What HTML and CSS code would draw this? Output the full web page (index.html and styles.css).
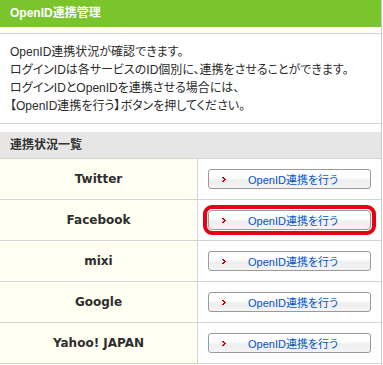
FILE: index.html
```html
<!DOCTYPE html>
<html lang="ja">
<head>
<meta charset="utf-8">
<title>OpenID連携管理</title>
<link rel="stylesheet" href="styles.css">
</head>
<body>
<div class="page">
  <h1 class="title">OpenID連携管理</h1>
  <div class="desc">
    <p>OpenID連携状況が確認できます。<br>ログインIDは各サービスのID個別に、連携をさせることができます。<br>ログインIDとOpenIDを連携させる場合には、<br>【OpenID連携を行う】ボタンを押してください。</p>
  </div>
  <h2 class="section">連携状況一覧</h2>
  <table class="list">
    <tr><th>Twitter</th><td><a class="btn" href="#"><svg class="chev" width="4" height="5" viewBox="0 0 4 5"><path d="M0 0h2v1h1v1h1v1h-1v1h-1v1h-2v-1h1v-1h1v-1h-1v-1h-1z" fill="#cc0000"/></svg><span>OpenID連携を行う</span></a></td></tr>
    <tr><th>Facebook</th><td><a class="btn btn-hl" href="#"><svg class="chev" width="4" height="5" viewBox="0 0 4 5"><path d="M0 0h2v1h1v1h1v1h-1v1h-1v1h-2v-1h1v-1h1v-1h-1v-1h-1z" fill="#cc0000"/></svg><span>OpenID連携を行う</span></a></td></tr>
    <tr><th>mixi</th><td><a class="btn" href="#"><svg class="chev" width="4" height="5" viewBox="0 0 4 5"><path d="M0 0h2v1h1v1h1v1h-1v1h-1v1h-2v-1h1v-1h1v-1h-1v-1h-1z" fill="#cc0000"/></svg><span>OpenID連携を行う</span></a></td></tr>
    <tr><th>Google</th><td><a class="btn" href="#"><svg class="chev" width="4" height="5" viewBox="0 0 4 5"><path d="M0 0h2v1h1v1h1v1h-1v1h-1v1h-2v-1h1v-1h1v-1h-1v-1h-1z" fill="#cc0000"/></svg><span>OpenID連携を行う</span></a></td></tr>
    <tr><th>Yahoo! JAPAN</th><td><a class="btn" href="#"><svg class="chev" width="4" height="5" viewBox="0 0 4 5"><path d="M0 0h2v1h1v1h1v1h-1v1h-1v1h-2v-1h1v-1h1v-1h-1v-1h-1z" fill="#cc0000"/></svg><span>OpenID連携を行う</span></a></td></tr>
  </table>
</div>
</body>
</html>
```

FILE: styles.css
```css
html, body {
  margin: 0;
  padding: 0;
  background: #ffffff;
}

body {
  font-family: "Liberation Sans", "Noto Sans CJK JP", sans-serif;
  color: #333333;
  font-feature-settings: "palt";
}

.page {
  width: 381px;
  border-right: 1px solid #cccccc;
  height: 365px;
  overflow: hidden;
}

.title {
  margin: 0;
  height: 27px;
  line-height: 27px;
  padding-left: 10px;
  background: #7ac42c;
  color: #ffffff;
  font-size: 12px;
  font-weight: bold;
}

.desc {
  margin-top: 6px;
  border-top: 1px solid #d4d4d4;
  border-bottom: 1px solid #d4d4d4;
  padding: 9px 0 8px 10px;
}

.desc p {
  margin: 0;
  font-size: 12px;
  line-height: 18px;
  white-space: nowrap;
  color: #2b2b2b;
}

.section {
  margin: 8px 0 0;
  height: 26px;
  line-height: 26px;
  padding-left: 10px;
  background: #e6e6e6;
  border-bottom: 1px solid #d4d4d4;
  font-size: 12px;
  font-weight: bold;
  color: #333333;
}

.list {
  width: 381px;
  border-collapse: collapse;
  table-layout: fixed;
}

.list th,
.list td {
  height: 40px;
  padding: 0;
  border-bottom: 1px solid #d4d4d4;
}

.list th {
  width: 197px;
  background: #fffff2;
  border-right: 1px solid #d4d4d4;
  font-family: "DejaVu Sans", "Noto Sans CJK JP", sans-serif;
  font-size: 12px;
  font-weight: bold;
  color: #2e2e2e;
  text-align: center;
}

.list td {
  background: #ffffff;
}

.btn {
  display: flex;
  align-items: center;
  box-sizing: border-box;
  width: 163px;
  height: 20px;
  margin: 0 auto;
  padding-left: 13px;
  border: 1px solid #9a9a9a;
  border-radius: 3px;
  background: linear-gradient(#ffffff 0%, #ffffff 40%, #eeeeee 60%, #f4f4f4 100%);
  text-decoration: none;
}

.btn span {
  margin-left: 22px;
  font-size: 11px;
  color: #0055cc;
  white-space: nowrap;
}

.chev {
  display: block;
  flex: none;
}

.btn-hl {
  outline: 4px solid #e60012;
  outline-offset: 1px;
  border-radius: 4px;
}
```
